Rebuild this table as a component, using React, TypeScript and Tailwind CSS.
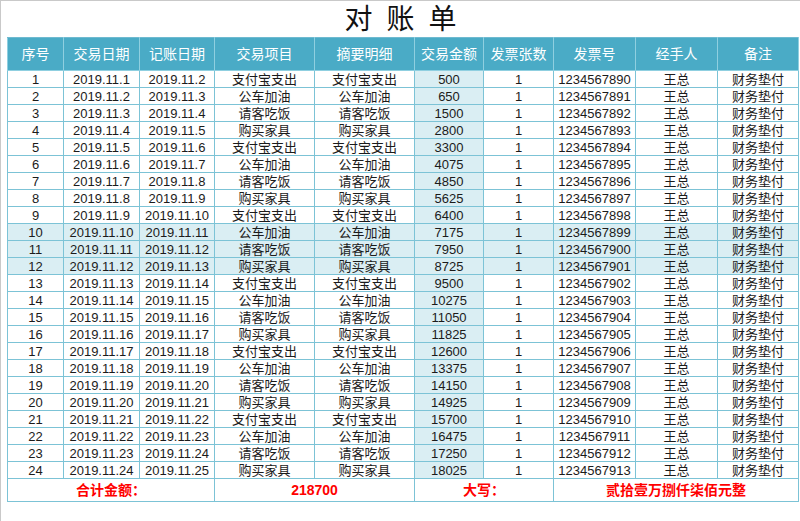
const ITEMS = ['支付宝支出', '公车加油', '请客吃饭', '购买家具']
const AMOUNTS = [500, 650, 1500, 2800, 3300, 4075, 4850, 5625, 6400, 7175, 7950, 8725, 9500, 10275, 11050, 11825, 12600, 13375, 14150, 14925, 15700, 16475, 17250, 18025]
const HEADERS = ['序号', '交易日期', '记账日期', '交易项目', '摘要明细', '交易金额', '发票张数', '发票号', '经手人', '备注']
const WIDTHS = ['w-[56px]', 'w-[76px]', 'w-[75px]', 'w-[100px]', 'w-[100px]', 'w-[69px]', 'w-[70px]', 'w-[82px]', 'w-[82px]', 'w-[81px]']

const rows = AMOUNTS.map((amount, i) => ({
  no: i + 1,
  tradeDate: `2019.11.${i + 1}`,
  bookDate: `2019.11.${i + 2}`,
  item: ITEMS[i % 4],
  amount,
  count: 1,
  invoice: String(1234567890 + i),
  handler: '王总',
  note: '财务垫付',
}))

const total = AMOUNTS.reduce((a, b) => a + b, 0)

export default function App() {
  const td = 'border border-[#7cc3d6] p-0 text-center align-middle leading-none'
  return (
    <div className="w-[800px] h-[521px] bg-white border-t border-l border-[#c9c9c9] font-['Liberation_Sans','Noto_Sans_CJK_SC',sans-serif] text-[#1b1b1b]">
      <div className="h-[36px] flex items-center justify-center pt-[2px]">
        <h1 className="text-[28px] leading-none tracking-[14px] mr-[-14px] text-[#111]">对账单</h1>
      </div>
      <table className="ml-[6px] w-[791px] table-fixed border-collapse text-[13px]">
        <colgroup>
          {WIDTHS.map((w, i) => <col key={i} className={w} />)}
        </colgroup>
        <thead>
          <tr className="h-[33px] bg-[#4aabc6]">
            {HEADERS.map((h) => (
              <th key={h} className="border border-[#8fcfe0] border-t-[#6fbad0] p-0 text-center align-middle font-normal text-[14px] text-white leading-none">
                {h}
              </th>
            ))}
          </tr>
        </thead>
        <tbody>
          {rows.map((r) => {
            const hl = r.no >= 10 && r.no <= 12
            return (
              <tr key={r.no} className={hl ? 'h-[17px] bg-[#daeef3]' : 'h-[17px]'}>
                <td className={td}>{r.no}</td>
                <td className={td}>{r.tradeDate}</td>
                <td className={td}>{r.bookDate}</td>
                <td className={td}>{r.item}</td>
                <td className={td}>{r.item}</td>
                <td className={`${td} bg-[#daeef3]`}>{r.amount}</td>
                <td className={td}>{r.count}</td>
                <td className={td}>{r.invoice}</td>
                <td className={td}>{r.handler}</td>
                <td className={td}>{r.note}</td>
              </tr>
            )
          })}
          <tr className="h-[23px] text-[14px] font-bold text-[#ff0000]">
            <td colSpan={3} className={td}>合计金额：</td>
            <td colSpan={2} className={td}>{total}</td>
            <td colSpan={2} className={td}>大写：</td>
            <td colSpan={3} className={td}>贰拾壹万捌仟柒佰元整</td>
          </tr>
        </tbody>
      </table>
    </div>
  )
}
